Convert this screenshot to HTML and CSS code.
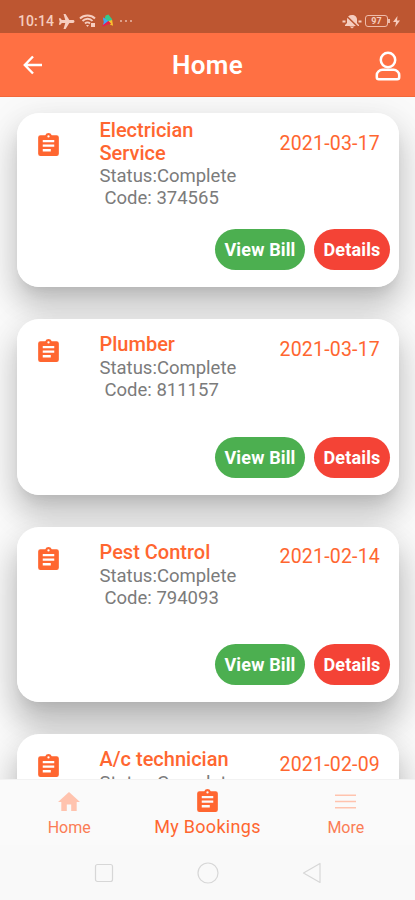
FILE: index.html
```html
<!DOCTYPE html>
<html lang="en">
<head>
<meta charset="utf-8">
<title>Home</title>
<link rel="stylesheet" href="styles.css">
</head>
<body>
<svg class="defs" width="0" height="0">
  <symbol id="clipboard" viewBox="3 1 18 20"><path fill-rule="evenodd" d="M19 3h-4.2a3 3 0 0 0-5.6 0H5a2 2 0 0 0-2 2v14a2 2 0 0 0 2 2h14a2 2 0 0 0 2-2V5a2 2 0 0 0-2-2zm-7 0a1 1 0 1 1 0 2 1 1 0 0 1 0-2zm2 14H7v-2h7zm3-4H7v-2h10zm0-4H7V7h10z"/></symbol>
</svg>
<div class="phone">
  <div class="status">
    <span class="time">10:14</span>
    <svg class="plane" viewBox="0 0 17 16"><path d="M17 8c0-.9-.7-1.500-1.500-1.500h-4L7.500 0H5.300l1.900 6.500H3.500L2 4.600H.3L1.200 8 .3 11.400H2l1.500-1.900h3.700L5.300 16h2.200l4-6.500h4c.8 0 1.500-.6 1.500-1.500z"/></svg>
    <svg class="wifi" viewBox="0 0 18 14"><path d="M1 4.500c4-4 11-4 15 0M3.500 7c3-3 7.500-3 10 0M6 9.500c1.500-1.500 3.500-1.500 5 0" fill="none" stroke="currentColor" stroke-width="1.900"/><path d="M7 11h3l-1.500 2zM12 9h4v4h-4z"/></svg>
    <svg class="app" viewBox="0 0 14 14"><path fill="#35c98d" d="M5 1l3-1 4 5-1 3-4-1-5-1 2-2z"/><path fill="#42a5f5" d="M2 3l6 4-6 5 1-4z"/><path fill="#fbc02d" d="M8 7l4-1 1 6-3-1z"/><path fill="#e91e4d" d="M1 12l7-5 3 3-5 1-3 2z"/></svg>
    <span class="dots"><i></i><i></i><i></i></span>
    <span class="grow"></span>
    <svg class="bell" viewBox="0 0 20 15"><path d="M10 1c-3 0-5 2-5 4.500V9l-2 2v1h14v-1l-2-2V5.500C15 3 13 1 10 1zM7.500 12.500h5L10 14.500zM.5 6.500h3v2h-3zM16.500 6.500h3v2h-3z"/><path d="M3.500 1l13.500 13" stroke="#bd5631" stroke-width="1.600"/></svg>
    <span class="battery">97</span>
    <svg class="bolt" viewBox="0 0 7 11"><path d="M4.500 0L0 6h3l-.8 5L7 4.500H4z"/></svg>
  </div>
  <header class="bar">
    <svg class="back" viewBox="0 0 20 20"><path d="M19 10H2M10 1.500L1.800 10l8.200 8.500"/></svg>
    <h1>Home</h1>
    <svg class="user" viewBox="0 0 26 30"><circle cx="13" cy="9" r="7.200"/><path d="M7.500 18.800h11c3 0 5.700 2.400 5.700 5.200v2.300c0 1.200-.8 2-2 2H3.800c-1.200 0-2-.8-2-2V24c0-2.800 2.700-5.200 5.700-5.200z"/></svg>
  </header>
  <main class="list">
    <article class="card">
      <svg class="clip"><use href="#clipboard"/></svg>
      <div class="info"><h2>Electrician Service</h2><p>Status:Complete</p><p class="code">Code: 374565</p></div>
      <time>2021-03-17</time>
      <div class="actions"><button class="bill">View Bill</button><button class="details">Details</button></div>
    </article>
    <article class="card">
      <svg class="clip"><use href="#clipboard"/></svg>
      <div class="info single"><h2>Plumber</h2><p>Status:Complete</p><p class="code">Code: 811157</p></div>
      <time>2021-03-17</time>
      <div class="actions"><button class="bill">View Bill</button><button class="details">Details</button></div>
    </article>
    <article class="card low">
      <svg class="clip"><use href="#clipboard"/></svg>
      <div class="info single"><h2>Pest Control</h2><p>Status:Complete</p><p class="code">Code: 794093</p></div>
      <time>2021-02-14</time>
      <div class="actions"><button class="bill">View Bill</button><button class="details">Details</button></div>
    </article>
    <article class="card low">
      <svg class="clip"><use href="#clipboard"/></svg>
      <div class="info single"><h2>A/c technician</h2><p>Status:Complete</p></div>
      <time>2021-02-09</time>
    </article>
  </main>
  <nav class="tabs">
    <div class="tab"><svg class="faded home" viewBox="0 0 22 19"><path d="M11 0L0 10h3.300v9h5.500v-6.500h4.400V19h5.500v-9H22z"/></svg><span>Home</span></div>
    <div class="tab active"><svg class="clip"><use href="#clipboard"/></svg><span>My Bookings</span></div>
    <div class="tab"><svg class="faded more" viewBox="0 0 21 15"><path d="M0 .5h21v1.500H0zM0 6.700h21v1.500H0zM0 13h21v1.500H0z"/></svg><span>More</span></div>
  </nav>
  <footer class="system">
    <svg viewBox="0 0 22 22"><rect x="2.500" y="2.500" width="17" height="17" rx="2"/></svg>
    <svg viewBox="0 0 22 22"><circle cx="11" cy="11" r="10"/></svg>
    <svg viewBox="0 0 22 22"><path d="M19 1.500v19L2.500 11z" stroke-linejoin="round"/></svg>
  </footer>
</div>
</body>
</html>
```
FILE: styles.css
```css
* { box-sizing: border-box; }
body { margin: 0; font-family: Roboto, "Liberation Sans", sans-serif; background: #fafafa; }
svg { display: block; flex: none; fill: currentColor; }
h1, h2, p { margin: 0; font-weight: 400; }
.defs { position: absolute; }
.phone { width: 415px; height: 900px; display: flex; flex-direction: column; overflow: hidden; }
.status { height: 33px; flex: none; background: #bd5631; color: #f6cdbf; display: flex; align-items: center; padding: 9px 15px 0 18px; }
.time { font-size: 14px; font-weight: 500; letter-spacing: .1px; width: 40px; white-space: nowrap; }
.plane { width: 17px; height: 15px; }
.wifi { width: 18px; height: 14px; margin-left: 4px; }
.app { width: 13px; height: 14px; margin-left: 4px; }
.dots { display: flex; gap: 3px; margin-left: 6px; }
.dots i { width: 2px; height: 2px; background: #dda08b; }
.grow { flex: 1; }
.bell { width: 20px; height: 15px; }
.battery { position: relative; width: 23px; height: 12px; margin: 0 5px 0 3px; border: 1px solid #eebbaa; border-radius: 3px; font-size: 9px; line-height: 10px; text-align: center; font-weight: 700; }
.battery::after { content: ""; position: absolute; right: -3px; top: 3px; width: 2px; height: 4px; background: #eebbaa; }
.bolt { width: 7px; height: 11px; }
.bar { height: 64px; flex: none; background: #ff7043; border-bottom: 1px solid #f2683b; color: #fff; display: grid; grid-template-columns: 60px 1fr 60px; align-items: center; }
.bar svg { fill: none; stroke: #fff; }
.back { width: 20px; height: 20px; margin-left: 23px; stroke-width: 2.400; }
.bar h1 { font-size: 26px; line-height: 30px; font-weight: 600; letter-spacing: .3px; text-align: center; }
.user { width: 26px; height: 30px; margin: 3px 0 0 19.500px; stroke-width: 2.500; }
.list { flex: 1; min-height: 0; overflow: hidden; padding: 16px 16px 0 16.500px; display: flex; flex-direction: column; gap: 32px; isolation: isolate; background: #fafafa; }
.card { position: relative; height: 175.500px; flex: none; border-radius: 22px; background: #fff; padding: 6px 19px 0 21px; display: grid; grid-template-columns: 62px 1fr auto; grid-template-rows: 111.500px 41px; align-items: start; color: #ff6630; }
.card:first-child { height: 174px; grid-template-rows: 110px 41px; }
.card::before { content: ""; position: absolute; inset: 0; z-index: -1; border-radius: 22px; box-shadow: 0 9px 13px -6px rgba(0,0,0,.1), 0 20px 30px 2px rgba(0,0,0,.17), 0 8px 36px 5px rgba(0,0,0,.07); }
.card.low::before { box-shadow: 0 9px 13px -6px rgba(0,0,0,.08), 0 24px 32px 2px rgba(0,0,0,.2), 0 8px 36px 5px rgba(0,0,0,.08); }
.clip { width: 21px; height: 23px; }
.card .clip { margin-top: 14px; }
.info h2 { font-size: 20px; line-height: 23px; font-weight: 500; width: 140px; }
.card:first-child .info h2 { width: 110px; }
.info.single h2 { margin: 8px 0 1px; }
.info p { font-size: 18.500px; line-height: 22px; color: #7b7b7b; white-space: nowrap; }
.info .code { padding-left: 5px; }
.card time { font-size: 19.500px; line-height: 23px; letter-spacing: .2px; margin-top: 12.500px; }
.actions { grid-column: 1 / -1; display: flex; justify-content: flex-end; gap: 9px; margin-right: -10px; }
.actions button { height: 41px; padding: 0; border: 0; border-radius: 21px; color: #fff; font: 700 18px Roboto, sans-serif; letter-spacing: .15px; }
.bill { width: 90px; background: #4caf50; }
.details { width: 76px; background: #f44336; }
.tabs { height: 66px; flex: none; z-index: 1; background: #fafafa; border-top: 1px solid #f2f2f2; display: grid; grid-template-columns: repeat(3, 1fr); color: #ff6630; }
.tab { display: flex; flex-direction: column; align-items: center; font-size: 16px; line-height: 20px; color: #fb7d55; }
.tab > span { position: relative; top: 1px; }
.tab.active { font-size: 18px; color: #ff6630; letter-spacing: .3px; }
.tab svg { margin: 9px 0 4px; }
.faded { color: #ffc3ae; }
.tab .home { width: 22px; height: 19px; margin: 12px 0 6px; }
.tab .more { width: 21px; height: 15px; margin: 14px 0 8px; }
.system { height: 55px; flex: none; background: #f9f9f9; display: flex; justify-content: center; gap: 82px; padding-top: 17px; }
.system svg { width: 22px; height: 22px; fill: none; stroke: #d7d7d7; stroke-width: 1.200; }
```
